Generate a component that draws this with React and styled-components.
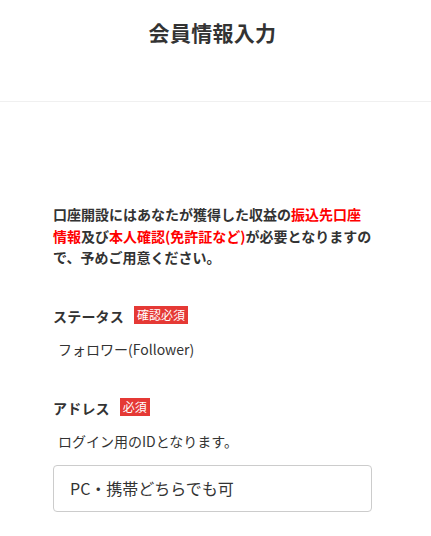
import styled, { createGlobalStyle } from "styled-components";

const GlobalStyle = createGlobalStyle`
  body {
    margin: 0;
    background: #fff;
    color: #333;
    font-family: "Noto Sans CJK JP", "Noto Sans", sans-serif;
  }
`;

function Field({ label, badge, children }) {
  return (
    <FieldBlock>
      <LabelRow>
        <Label>{label}</Label>
        <Badge>{badge}</Badge>
      </LabelRow>
      {children}
    </FieldBlock>
  );
}

function App() {
  return (
    <Page>
      <GlobalStyle />
      <Header>
        <Title>会員情報入力</Title>
      </Header>
      <Main>
        <Notice>
          口座開設にはあなたが獲得した収益の<Em>振込先口座</Em>
          <Em>情報</Em>及び<Em>本人確認(免許証など)</Em>
          が必要となりますので、予めご用意ください。
        </Notice>
        <Field label="ステータス" badge="確認必須">
          <Value>フォロワー(Follower)</Value>
        </Field>
        <Field label="アドレス" badge="必須">
          <Help>ログイン用のIDとなります。</Help>
          <Input placeholder="PC・携帯どちらでも可" />
        </Field>
      </Main>
    </Page>
  );
}

const Page = styled.div`
  min-height: 536px;
`;

const Header = styled.header`
  height: 102px;
  box-sizing: border-box;
  border-bottom: 1px solid #f0f0f0;
  display: flex;
  justify-content: center;
  padding: 18px 0 0 0;
`;

const Title = styled.h1`
  margin: 0;
  font-size: 21px;
  line-height: 28px;
  font-weight: bold;
  color: #333;
  letter-spacing: 0.3px;
  transform: translateX(-3px);
`;

const Main = styled.main`
  padding: 0 59px 0 53px;
`;

const Notice = styled.p`
  margin: 102px 0 0;
  font-size: 14px;
  line-height: 21.5px;
  font-weight: bold;
  color: #333;
`;

const Em = styled.span`
  color: #ff0000;
`;

const FieldBlock = styled.section`
  margin-top: 35px;

  & + & {
    margin-top: 36px;
  }
`;

const LabelRow = styled.div`
  display: flex;
  align-items: center;
  gap: 10px;
  height: 24px;
`;

const Label = styled.span`
  font-size: 14px;
  font-weight: bold;
  color: #333;
  letter-spacing: 0.2px;
`;

const Badge = styled.span`
  display: inline-block;
  background: #e53935;
  color: #fff;
  font-size: 12px;
  line-height: 18px;
  padding: 0 3px;
  margin-top: -2px;
`;

const Value = styled.div`
  margin: 11px 0 0 5px;
  font-size: 14px;
  line-height: 21px;
  color: #333;
`;

const Help = styled(Value)`
  margin-top: 11px;
`;

const Input = styled.input`
  display: block;
  box-sizing: border-box;
  width: 319px;
  height: 47px;
  margin-top: 13px;
  padding: 0 16px;
  border: 1px solid #ccc;
  border-radius: 4px;
  font-family: inherit;
  font-size: 16px;
  color: #333;
  background: #fff;

  &::placeholder {
    color: #333;
  }
`;

export default App;
